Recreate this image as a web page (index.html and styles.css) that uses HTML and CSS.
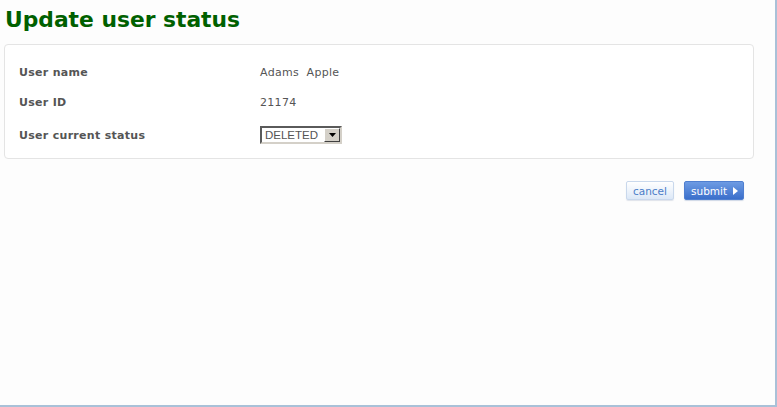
FILE: index.html
```html
<!DOCTYPE html>
<html>
<head>
<meta charset="utf-8">
<link rel="stylesheet" href="styles.css">
</head>
<body>
<div class="page">
  <h1 class="title">Update user status</h1>
  <div class="panel">
    <div class="row">
      <div class="label">User name</div>
      <div class="value">Adams&nbsp; Apple</div>
    </div>
    <div class="row">
      <div class="label">User ID</div>
      <div class="value">21174</div>
    </div>
    <div class="row row-select">
      <div class="label">User current status</div>
      <div class="value">
        <span class="select">
          <span class="select-text">DELETED</span>
          <span class="select-btn"><svg width="7" height="4" viewBox="0 0 7 4"><path d="M0 0h7L3.5 4z" fill="#000"/></svg></span>
        </span>
      </div>
    </div>
  </div>
  <div class="actions">
    <button class="btn btn-cancel">cancel</button>
    <button class="btn btn-submit"><span>submit</span><svg class="tri" width="5" height="8" viewBox="0 0 5 8"><path d="M0 0L5 4L0 8z" fill="#fff"/></svg></button>
  </div>
</div>
</body>
</html>
```

FILE: styles.css
```css
html, body {
  margin: 0;
  padding: 0;
}
body {
  background: #ffffff;
  font-family: "DejaVu Sans", Verdana, sans-serif;
}
.page {
  box-sizing: border-box;
  width: 777px;
  height: 407px;
  background: #fdfdfd;
  border-right: 2px solid #a9c1d8;
  border-bottom: 2px solid #a9c1d8;
  padding: 4px 0 0 4px;
}
.title {
  margin: 0 0 8px 1px;
  font-size: 21.8px;
  line-height: 32px;
  font-weight: bold;
  color: #006000;
}
.panel {
  box-sizing: border-box;
  width: 750px;
  height: 115px;
  border: 1px solid #e4e4e4;
  border-radius: 4px;
  background: #ffffff;
  padding: 12px 0 0 14px;
}
.row {
  display: flex;
  align-items: center;
  height: 30px;
  font-size: 11px;
  color: #555555;
}
.row-select {
  height: 32px;
  margin-top: 2px;
}
.label {
  width: 241px;
  font-weight: bold;
  letter-spacing: 0.3px;
}
.value {
  font-family: "DejaVu Sans", Verdana, sans-serif;
  letter-spacing: 0.3px;
}
.select {
  display: flex;
  box-sizing: border-box;
  width: 82px;
  height: 18px;
  border: 2px solid;
  border-color: #5a5a5a #d4d0c8 #d4d0c8 #5a5a5a;
  background: #fff;
  font-family: "Liberation Sans", Arial, sans-serif;
  font-size: 11.5px;
  letter-spacing: 0;
  color: #555;
}
.select-text {
  flex: 1;
  padding-left: 3px;
  line-height: 14px;
}
.select-btn {
  box-sizing: border-box;
  width: 16px;
  height: 14px;
  background: #d4d0c8;
  border: 1px solid;
  border-color: #ffffff #404040 #404040 #ffffff;
  display: flex;
  align-items: center;
  justify-content: center;
}
.actions {
  display: flex;
  justify-content: flex-end;
  gap: 10px;
  width: 740px;
  margin-top: 22px;
}
.btn {
  box-sizing: border-box;
  height: 19px;
  font-family: "DejaVu Sans", Verdana, sans-serif;
  font-size: 10.5px;
  border-radius: 2px;
  cursor: pointer;
  display: flex;
  align-items: center;
}
.btn-cancel {
  width: 48px;
  padding: 0;
  justify-content: center;
  color: #4a7dc8;
  background: linear-gradient(#ffffff, #dce8f7);
  border: 1px solid #c9d8ec;
  box-shadow: 0 1px 1px #dfe3ea;
}
.btn-submit {
  width: 60px;
  padding: 0 5px 0 6px;
  justify-content: space-between;
  color: #ffffff;
  background: linear-gradient(#6d9be3, #3b6fcb);
  border: 1px solid #4f7fd0;
  box-shadow: 0 1px 1px #cfd8e6;
}
.tri {
  flex-shrink: 0;
}
```
